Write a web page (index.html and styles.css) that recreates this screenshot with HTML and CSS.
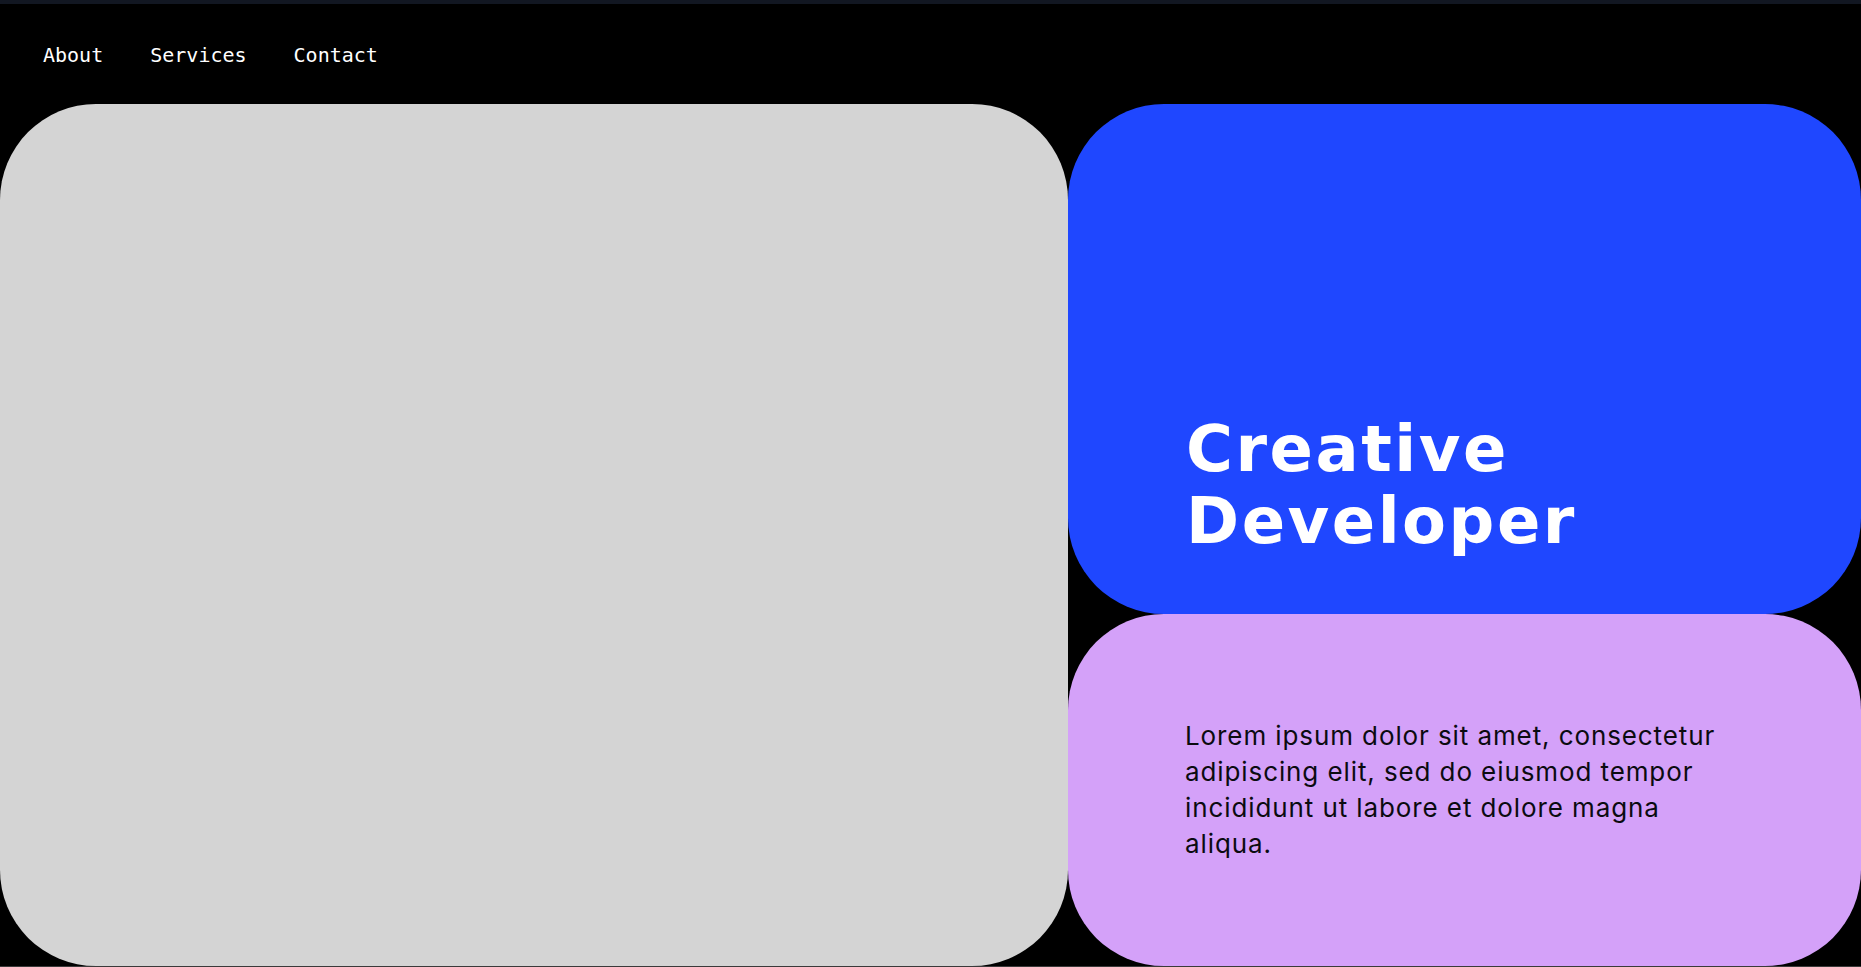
FILE: index.html
```html
<!DOCTYPE html>
<html lang="en">
<head>
<meta charset="utf-8">
<title>Creative Developer</title>
<link rel="stylesheet" href="styles.css">
</head>
<body>
<div class="topbar"></div>
<header class="nav">
  <a href="#about">About</a>
  <a href="#services">Services</a>
  <a href="#contact">Contact</a>
</header>
<main class="grid">
  <section class="card media"></section>
  <section class="card intro">
    <h1>Creative<br>Developer</h1>
  </section>
  <section class="card about">
    <p>Lorem ipsum dolor sit amet, consectetur adipiscing elit, sed do eiusmod tempor incididunt ut labore et dolore magna aliqua.</p>
  </section>
</main>
<div class="bottomline"></div>
</body>
</html>
```
FILE: styles.css
```css
html, body {
  margin: 0;
  padding: 0;
  background: #000;
  height: 100%;
  overflow: hidden;
}
body {
  display: flex;
  flex-direction: column;
}
.topbar {
  height: 4px;
  background: #121722;
  flex: none;
}
.nav {
  height: 100px;
  flex: none;
  display: flex;
  align-items: center;
  gap: 47px;
  padding: 2px 0 0 43px;
  box-sizing: border-box;
}
.nav a {
  color: #fff;
  text-decoration: none;
  font-family: "DejaVu Sans Mono", "Liberation Mono", monospace;
  font-size: 20px;
}
.grid {
  flex: 1;
  display: grid;
  grid-template-columns: 1068px 1fr;
  grid-template-rows: 510px 1fr;
}
.card {
  border-radius: 96px;
}
.media {
  grid-row: 1 / 3;
  background: #d4d4d4;
}
.intro {
  background: #1f47ff;
  display: flex;
  flex-direction: column;
  justify-content: flex-end;
  padding: 0 0 57px 118px;
}
.intro h1 {
  margin: 0;
  color: #fff;
  font-family: "DejaVu Sans", Inter, sans-serif;
  font-weight: 700;
  font-size: 64px;
  line-height: 72px;
  letter-spacing: 2.5px;
}
.about {
  background: #d4a1f9;
  display: flex;
  align-items: center;
  padding-left: 117px;
}
.about p {
  margin: 0;
  max-width: 560px;
  color: #0b0b10;
  font-family: Inter, "Noto Sans", sans-serif;
  font-size: 26px;
  line-height: 36px;
  letter-spacing: 0.9px;
}
.bottomline {
  height: 1px;
  flex: none;
  background: #3a3a3a;
}
```
